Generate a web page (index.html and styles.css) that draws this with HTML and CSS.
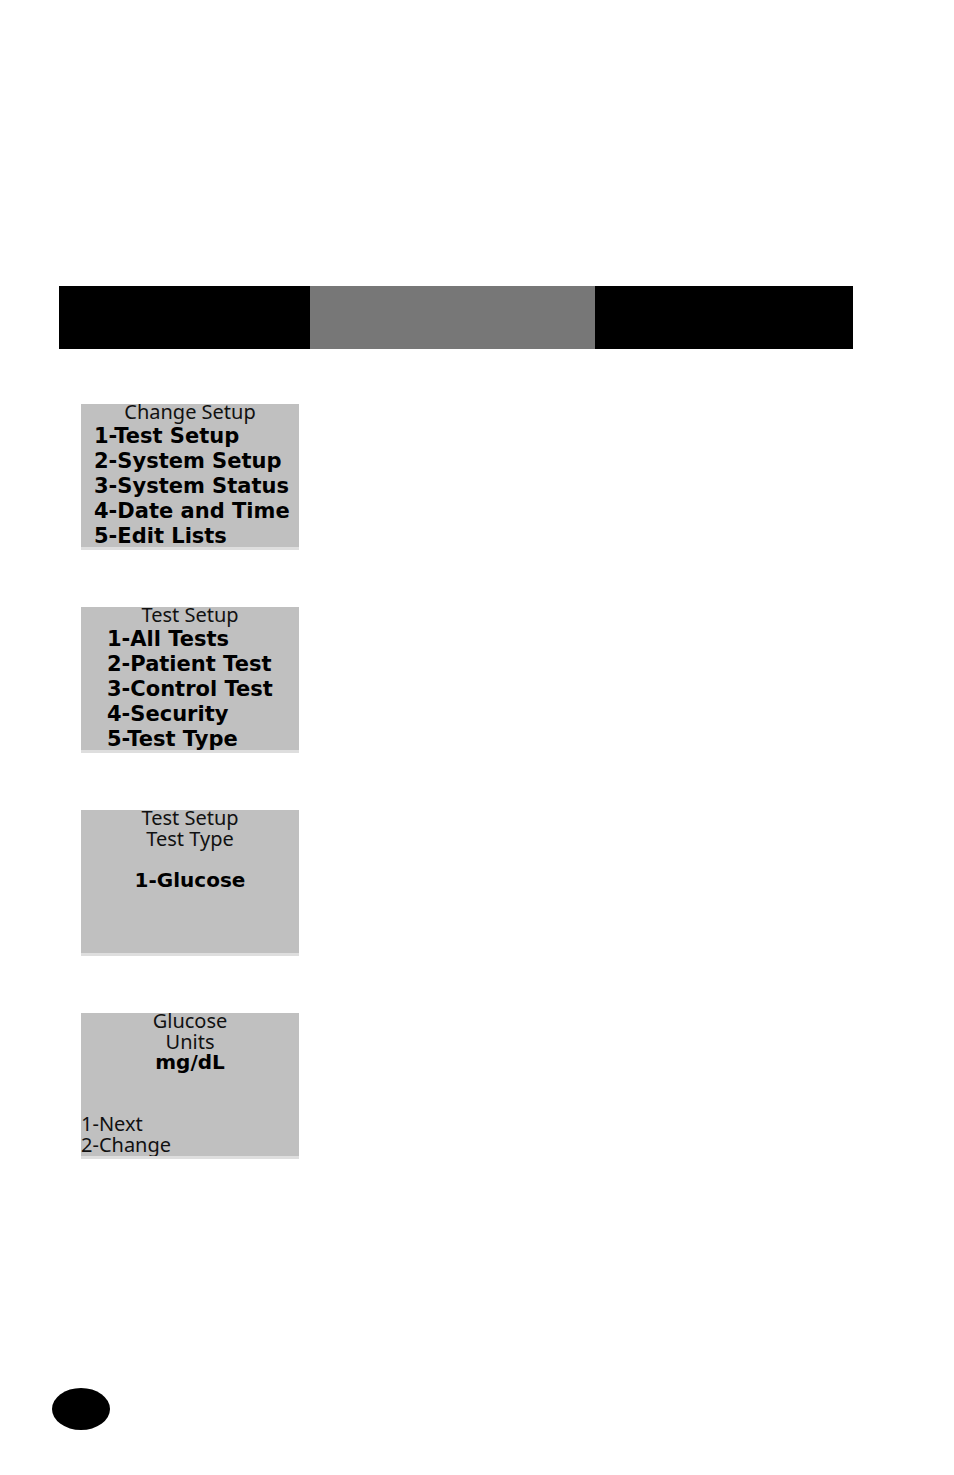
FILE: index.html
```html
<!DOCTYPE html>
<html lang="en">
<head>
    <meta charset="UTF-8">
    <meta name="viewport" content="width=device-width, initial-scale=1.0">
    <title>Change Setup - Test Type</title>
    <link rel="stylesheet" href="styles.css">
</head>
<body>
    <main class="page">
        <div class="header-bar">
            <div class="header-cell"></div>
            <div class="header-cell middle"></div>
            <div class="header-cell"></div>
        </div>

        <div class="steps">
            <section class="screen">
                <h2 class="line">Change Setup</h2>
                <ul class="menu">
                    <li>1-Test Setup</li>
                    <li>2-System Setup</li>
                    <li>3-System Status</li>
                    <li>4-Date and Time</li>
                    <li>5-Edit Lists</li>
                </ul>
            </section>

            <section class="screen">
                <h2 class="line">Test Setup</h2>
                <ul class="menu indented">
                    <li>1-All Tests</li>
                    <li>2-Patient Test</li>
                    <li>3-Control Test</li>
                    <li>4-Security</li>
                    <li>5-Test Type</li>
                </ul>
            </section>

            <section class="screen">
                <h2 class="line">Test Setup</h2>
                <h3 class="line">Test Type</h3>
                <p class="line strong after-blank">1-Glucose</p>
            </section>

            <section class="screen">
                <h2 class="line">Glucose</h2>
                <h3 class="line">Units</h3>
                <p class="line strong">mg/dL</p>
                <ul class="actions">
                    <li class="line">1-Next</li>
                    <li class="line">2-Change</li>
                </ul>
            </section>
        </div>
    </main>

    <footer class="footer">
        <div class="page-marker"></div>
    </footer>
</body>
</html>
```
FILE: styles.css
```css
* {
    box-sizing: border-box;
}
body {
    margin: 0;
    background: white;
    color: #111;
    font-family: "Noto Sans", sans-serif;
    font-size: 20px;
}
h2, h3, p, ul {
    margin: 0;
    padding: 0;
}
ul {
    list-style: none;
}
.page {
    padding: 286px 101px 0 59px;
}
.header-bar {
    display: grid;
    grid-template-columns: 251fr 285fr 258fr;
    height: 63px;
}
.header-cell {
    background: black;
}
.header-cell.middle {
    background: #777;
}
.steps {
    display: flex;
    flex-direction: column;
    gap: 57px;
    padding: 55px 0 0 22px;
}
/* the top text row is cut off by the display edge */
.screen {
    width: 218px;
    height: 146px;
    background: #c0c0c0;
    border-bottom: 3px solid #dedede;
    overflow: hidden;
    display: flex;
    flex-direction: column;
}
.screen h2 {
    margin-top: -3px;
}
.line {
    flex: none;
    font-size: 20px;
    font-weight: normal;
    line-height: 21px;
    text-align: center;
    white-space: nowrap;
}
.menu {
    padding: 2px 0 0 13px;
    color: black;
    font-family: "DejaVu Sans", sans-serif;
    font-size: 21px;
    font-weight: bold;
    line-height: 25px;
    white-space: nowrap;
}
.menu.indented {
    padding-left: 26px;
}
.strong {
    color: black;
    font-family: "DejaVu Sans", sans-serif;
    font-size: 20px;
    font-weight: bold;
}
.after-blank {
    margin-top: 21px;
}
.actions {
    margin-top: 40px;
}
.actions .line {
    text-align: left;
}
.footer {
    padding: 229px 52px 45px;
}
.page-marker {
    width: 58px;
    height: 42px;
    background: black;
    border-radius: 50%;
}
```
